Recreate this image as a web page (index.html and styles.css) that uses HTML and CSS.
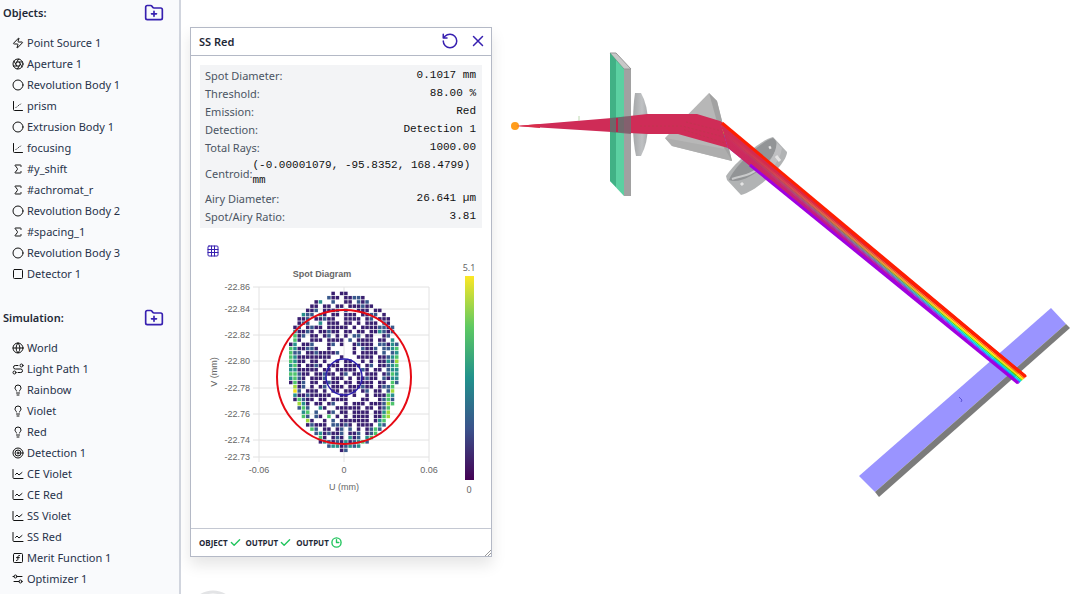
FILE: index.html
```html
<!DOCTYPE html>
<html lang="en">
<head>
  <meta charset="UTF-8">
  <meta name="viewport" content="width=device-width, initial-scale=1.0">
  <title>Optical Workbench</title>
  <link rel="stylesheet" href="styles.css">
</head>
<body>
  <svg class="sprite" aria-hidden="true">
    <symbol id="i-folder" viewBox="0 0 24 24"><path d="M12 10v6M9 13h6M20 20a2 2 0 0 0 2-2V8a2 2 0 0 0-2-2h-7.900a2 2 0 0 1-1.690-.900L9.600 3.900A2 2 0 0 0 7.930 3H4a2 2 0 0 0-2 2v13a2 2 0 0 0 2 2Z"/></symbol>
    <symbol id="i-zap" viewBox="0 0 24 24"><path d="M4 14a1 1 0 0 1-.780-1.630l9.900-10.200a.5.5 0 0 1 .860.460l-1.920 6.020A1 1 0 0 0 13 10h7a1 1 0 0 1 .780 1.630l-9.900 10.200a.5.5 0 0 1-.860-.460l1.920-6.020A1 1 0 0 0 11 14z"/></symbol>
    <symbol id="i-aperture" viewBox="0 0 24 24"><circle cx="12" cy="12" r="10"/><path d="m14.310 8 5.740 9.940M9.690 8h11.480M7.380 12l5.740-9.940M9.690 16 3.950 6.060M14.310 16H2.830M16.620 12l-5.740 9.940"/></symbol>
    <symbol id="i-circle" viewBox="0 0 24 24"><circle cx="12" cy="12" r="10"/></symbol>
    <symbol id="i-scatter" viewBox="0 0 24 24"><path d="M3 3v16a2 2 0 0 0 2 2h16M8 15l1-1M12 12l1-1M16 9l1-1"/></symbol>
    <symbol id="i-sigma" viewBox="0 0 24 24"><path d="M18 7V5a1 1 0 0 0-1-1H6.500a.5.5 0 0 0-.4.800l4.500 6a2 2 0 0 1 0 2.400l-4.500 6a.5.5 0 0 0 .4.800H17a1 1 0 0 0 1-1v-2"/></symbol>
    <symbol id="i-square" viewBox="0 0 24 24"><rect x="3" y="3" width="18" height="18" rx="2"/></symbol>
    <symbol id="i-globe" viewBox="0 0 24 24"><circle cx="12" cy="12" r="10"/><path d="M12 2a14.500 14.500 0 0 0 0 20 14.500 14.500 0 0 0 0-20M2 12h20"/></symbol>
    <symbol id="i-route" viewBox="0 0 24 24"><circle cx="5" cy="19" r="3"/><circle cx="19" cy="5" r="3"/><path d="M12 5H6.500a3.500 3.500 0 0 0 0 7h11a3.500 3.500 0 0 1 0 7H12"/></symbol>
    <symbol id="i-bulb" viewBox="0 0 24 24"><path d="M15 14c.2-1 .7-1.700 1.500-2.500 1-.9 1.500-2.200 1.500-3.500A6 6 0 0 0 6 8c0 1 .2 2.200 1.500 3.500.7.7 1.300 1.500 1.500 2.500M9 18h6M10 22h4"/></symbol>
    <symbol id="i-target" viewBox="0 0 24 24"><circle cx="12" cy="12" r="10"/><circle cx="12" cy="12" r="6"/><circle cx="12" cy="12" r="2"/></symbol>
    <symbol id="i-chart" viewBox="0 0 24 24"><path d="M2 3v16a2 2 0 0 0 2 2h18M7 13l3-3 4 4 6-5"/></symbol>
    <symbol id="i-function" viewBox="0 0 24 24"><rect x="3" y="3" width="18" height="18" rx="2"/><path d="M9 17c2 0 2.800-1 2.800-2.800V10c0-2 1-3.300 3.200-3M9 11.200h5.700"/></symbol>
    <symbol id="i-sliders" viewBox="0 0 24 24"><path d="M20 7h-9M14 17H4M2 7h2"/><circle cx="17" cy="17" r="3"/><circle cx="7" cy="7" r="3"/></symbol>
    <symbol id="i-reset" viewBox="0 0 24 24"><path d="M3 12a9 9 0 1 0 9-9 9.750 9.750 0 0 0-6.740 2.740L3 8M3 3v5h5"/></symbol>
    <symbol id="i-close" viewBox="0 0 24 24"><path d="M18 6 6 18M6 6l12 12"/></symbol>
    <symbol id="i-grid" viewBox="0 0 24 24"><rect x="2" y="2" width="20" height="20" rx="2"/><path d="M2 9h20M2 15h20M9 2v20M15 2v20"/></symbol>
    <symbol id="i-check" viewBox="0 0 24 24"><path d="M21 6 9 18l-6-6"/></symbol>
    <symbol id="i-clock" viewBox="0 0 24 24"><circle cx="12" cy="12" r="10"/><path d="M12 6v6h5"/></symbol>
  </svg>

  <aside class="sidebar">
    <section class="group">
      <div class="group-header">
        <h2>Objects:</h2>
        <button type="button" class="icon-btn" aria-label="Add object"><svg class="icon icon-lg"><use href="#i-folder"/></svg></button>
      </div>
      <ul class="tree">
        <li><a href="#"><svg class="icon"><use href="#i-zap"/></svg>Point Source 1</a></li>
        <li><a href="#"><svg class="icon"><use href="#i-aperture"/></svg>Aperture 1</a></li>
        <li><a href="#"><svg class="icon"><use href="#i-circle"/></svg>Revolution Body 1</a></li>
        <li><a href="#"><svg class="icon"><use href="#i-scatter"/></svg>prism</a></li>
        <li><a href="#"><svg class="icon"><use href="#i-circle"/></svg>Extrusion Body 1</a></li>
        <li><a href="#"><svg class="icon"><use href="#i-scatter"/></svg>focusing</a></li>
        <li><a href="#"><svg class="icon"><use href="#i-sigma"/></svg>#y_shift</a></li>
        <li><a href="#"><svg class="icon"><use href="#i-sigma"/></svg>#achromat_r</a></li>
        <li><a href="#"><svg class="icon"><use href="#i-circle"/></svg>Revolution Body 2</a></li>
        <li><a href="#"><svg class="icon"><use href="#i-sigma"/></svg>#spacing_1</a></li>
        <li><a href="#"><svg class="icon"><use href="#i-circle"/></svg>Revolution Body 3</a></li>
        <li><a href="#"><svg class="icon"><use href="#i-square"/></svg>Detector 1</a></li>
      </ul>
    </section>
    <section class="group">
      <div class="group-header">
        <h2>Simulation:</h2>
        <button type="button" class="icon-btn" aria-label="Add simulation"><svg class="icon icon-lg"><use href="#i-folder"/></svg></button>
      </div>
      <ul class="tree">
        <li><a href="#"><svg class="icon"><use href="#i-globe"/></svg>World</a></li>
        <li><a href="#"><svg class="icon"><use href="#i-route"/></svg>Light Path 1</a></li>
        <li><a href="#"><svg class="icon"><use href="#i-bulb"/></svg>Rainbow</a></li>
        <li><a href="#"><svg class="icon"><use href="#i-bulb"/></svg>Violet</a></li>
        <li><a href="#"><svg class="icon"><use href="#i-bulb"/></svg>Red</a></li>
        <li><a href="#"><svg class="icon"><use href="#i-target"/></svg>Detection 1</a></li>
        <li><a href="#"><svg class="icon"><use href="#i-chart"/></svg>CE Violet</a></li>
        <li><a href="#"><svg class="icon"><use href="#i-chart"/></svg>CE Red</a></li>
        <li><a href="#"><svg class="icon"><use href="#i-chart"/></svg>SS Violet</a></li>
        <li><a href="#"><svg class="icon"><use href="#i-chart"/></svg>SS Red</a></li>
        <li><a href="#"><svg class="icon"><use href="#i-function"/></svg>Merit Function 1</a></li>
        <li><a href="#"><svg class="icon"><use href="#i-sliders"/></svg>Optimizer 1</a></li>
      </ul>
    </section>
  </aside>

  <main class="viewport">
    <svg class="scene" viewBox="181 0 899 594" preserveAspectRatio="xMidYMid slice" role="img" aria-label="Optical scene">
      <defs>
        <linearGradient id="beam-fade" gradientUnits="userSpaceOnUse" x1="722" y1="135" x2="960" y2="333">
          <stop offset="0" stop-color="#cf2c57"/>
          <stop offset=".25" stop-color="#cf2c57" stop-opacity=".85"/>
          <stop offset=".6" stop-color="#cf2c57" stop-opacity=".5"/>
          <stop offset="1" stop-color="#cf2c57" stop-opacity="0"/>
        </linearGradient>
        <linearGradient id="lens" x1="0" x2="1">
          <stop offset="0" stop-color="#a5a7a9"/>
          <stop offset=".6" stop-color="#bfc1c3"/>
          <stop offset="1" stop-color="#a9abad"/>
        </linearGradient>
      </defs>
      <circle cx="213" cy="615" r="23" fill="none" stroke="#e3e4e6" stroke-width="3"/>

      <!-- collimating lens -->
      <path d="M635 93H641Q648 105 648 124T641 156H636Q633 142 633 124T635 93Z" fill="url(#lens)"/>

      <!-- prism -->
      <path d="M709 93 665 138 672 146 732 161 717 101Z" fill="#b7b7b7"/>
      <path d="M709 93 717 101 732 161 727 158Z" fill="#a2a2a2"/>
      <path d="M665 138 672 146 732 161 725 149Z" fill="#adadad"/>

      <!-- focusing doublet -->
      <path d="M726 176C735 162 762 139 773 137L787 152C787 164 757 191 741 195L727 180Z" fill="#b1b3b4"/>
      <path d="M729 180C736 164 762 141 773 138 781 143 774 157 764 166 754 176 738 184 729 180Z" fill="#929496"/>
      <path d="M732 179C744 175 750 176 760 167" fill="none" stroke="#c9cacb" stroke-width="2"/>
      <path d="M765 167Q775 157 777 143L782 148Q780 161 770 170Z" fill="#bfc0c2"/>
      <path d="M776 156 780 161M741 183 743 185M769 148 771 147" stroke="#e4e4e4" stroke-width="3"/>

      <!-- detector -->
      <path d="M1051 308 1066 324 875 492 859 476Z" fill="#9a94ff"/>
      <path d="M1066 324 1070 328 879 497 875 492Z" fill="#7b7b7b"/>
      <path d="m959 397 3 3-1 2" fill="none" stroke="#5b52d6"/>

      <!-- rays -->
      <path d="M516 126 612 118 647 114H697L720 121 728 148 678 134H647L612 132Z" fill="#cf2c57"/>
      <path d="M640 126H682L724 137M686 122 722 131M684 130 725 143" fill="none" stroke="#c23450" stroke-width="1" stroke-dasharray="2 2"/>
      <g id="spectrum"></g>
      <path d="M720 121 1026 376 1018 384 728 148Z" fill="url(#beam-fade)"/>
      <path d="M722 123 1025 376" stroke="#ff1e00" stroke-width="3"/>
      <path d="M750 165 1018 383" stroke="#a000e0" stroke-width="3"/>
      <circle cx="515" cy="126" r="4" fill="#ff9d1c"/>
      <path d="M516 126 540 124V128Z" fill="#d92e4b"/>
      <path d="M579 116v5" stroke="#bcd8b0" stroke-width="1"/>

      <!-- aperture plate -->
      <path d="M610 53H616L631 69H624Z" fill="#c8c8c8" stroke="#969696" stroke-width="1"/>
      <path d="M610 53 624 69V196L610 181Z" fill="#32c48a" fill-opacity=".8"/>
      <path d="M610 53 616 60V187L610 181Z" fill="#319c73" fill-opacity=".6"/>
      <path d="M624 69H631V196H624Z" fill="#909090" fill-opacity=".85"/>
      <path d="M610 118 631 116V134L610 132Z" fill="#7c5565" fill-opacity=".75"/>
      <path d="M617 118v14" stroke="#bd244a" stroke-width="2"/>
    </svg>

    <section class="window">
      <header class="window-header">
        <h1>SS Red</h1>
        <button type="button" class="icon-btn" aria-label="Refresh"><svg class="icon icon-xl"><use href="#i-reset"/></svg></button>
        <button type="button" class="icon-btn" aria-label="Close"><svg class="icon icon-xl"><use href="#i-close"/></svg></button>
      </header>

      <div class="window-body">
        <dl class="stats">
          <div><dt>Spot Diameter:</dt><dd>0.1017 mm</dd></div>
          <div><dt>Threshold:</dt><dd>88.00 %</dd></div>
          <div><dt>Emission:</dt><dd>Red</dd></div>
          <div><dt>Detection:</dt><dd>Detection 1</dd></div>
          <div><dt>Total Rays:</dt><dd>1000.00</dd></div>
          <div><dt>Centroid:</dt><dd>(-0.00001079, -95.8352, 168.4799) mm</dd></div>
          <div><dt>Airy Diameter:</dt><dd>26.641 µm</dd></div>
          <div><dt>Spot/Airy Ratio:</dt><dd>3.81</dd></div>
        </dl>

        <button type="button" class="icon-btn grid-btn" aria-label="Toggle grid"><svg class="icon"><use href="#i-grid"/></svg></button>

        <svg class="chart" viewBox="0 0 282 240" role="img" aria-label="Spot Diagram">
          <defs>
            <linearGradient id="viridis" x1="0" y1="1" x2="0" y2="0">
              <stop offset="0" stop-color="#440154"/>
              <stop offset=".25" stop-color="#3b528b"/>
              <stop offset=".5" stop-color="#21918c"/>
              <stop offset=".75" stop-color="#5ec962"/>
              <stop offset="1" stop-color="#fde725"/>
            </linearGradient>
          </defs>
          <text class="chart-title" x="122" y="17">Spot Diagram</text>
          <path class="gridlines" d="M53 27H229M53 49H229M53 75H229M53 101H229M53 128H229M53 154H229M53 180H229M53 197H229M59 27V202M144 27V202M229 27V202"/>
          <g class="ticks-y">
            <text x="50" y="30">-22.86</text>
            <text x="50" y="52">-22.84</text>
            <text x="50" y="78">-22.82</text>
            <text x="50" y="104">-22.80</text>
            <text x="50" y="131">-22.78</text>
            <text x="50" y="157">-22.76</text>
            <text x="50" y="183">-22.74</text>
            <text x="50" y="200">-22.73</text>
          </g>
          <g class="ticks-x">
            <text x="59" y="213">-0.06</text>
            <text x="144" y="213">0</text>
            <text x="229" y="213">0.06</text>
            <text x="144" y="230">U (mm)</text>
            <text transform="translate(17 112) rotate(-90)">V (mm)</text>
          </g>
          <g id="spots"></g>
          <circle cx="144" cy="117" r="67" fill="none" stroke="#e60a14" stroke-width="2"/>
          <circle cx="144" cy="117" r="18" fill="none" stroke="#2c1fb0" stroke-width="1.500"/>
          <rect x="265" y="16" width="9" height="204" fill="url(#viridis)"/>
          <text class="scale-label" x="269" y="11">5.1</text>
          <text class="scale-label" x="269" y="233">0</text>
        </svg>
      </div>

      <footer class="window-footer">
        <span>OBJECT <svg class="icon icon-sm"><use href="#i-check"/></svg></span>
        <span>OUTPUT <svg class="icon icon-sm"><use href="#i-check"/></svg></span>
        <span>OUTPUT <svg class="icon icon-sm"><use href="#i-clock"/></svg></span>
        <svg class="grip" viewBox="0 0 6 6"><path d="M0 6 6 0M3 6 6 3"/></svg>
      </footer>
    </section>
  </main>

  <script src="script.js"></script>
</body>
</html>
```
FILE: styles.css
```css
* {
  box-sizing: border-box;
}
body {
  margin: 0;
  display: flex;
  height: 100vh;
  overflow: hidden;
  background: #fff;
  color: #1f2937;
  font-family: 'Noto Sans', sans-serif;
  font-size: 11px;
}
h1, h2, ul, dl, dd {
  margin: 0;
  padding: 0;
}
.sprite {
  position: absolute;
  width: 0;
  height: 0;
}
.icon {
  width: 12px;
  height: 12px;
  flex-shrink: 0;
  fill: none;
  stroke: currentColor;
  stroke-width: 2;
  stroke-linecap: round;
  stroke-linejoin: round;
}
.icon-sm {
  width: 11px;
  height: 11px;
}
.icon-lg {
  width: 20px;
  height: 20px;
}
.icon-xl {
  width: 18px;
  height: 18px;
}
.icon-btn {
  display: flex;
  padding: 0;
  border: none;
  background: none;
  color: #3720b0;
  cursor: pointer;
}

/* Sidebar */
.sidebar {
  width: 181px;
  flex-shrink: 0;
  overflow: hidden;
  background: #f9fafc;
  border-right: 2px solid #d1d5de;
}
.group {
  margin-bottom: 21px;
}
.group-header {
  display: flex;
  align-items: center;
  justify-content: space-between;
  height: 25px;
  padding: 0 15px 0 3px;
}
.group-header h2 {
  font-size: 11px;
  font-weight: 600;
}
.tree {
  padding: 7px 0 0 12px;
  list-style: none;
}
.tree a {
  display: flex;
  align-items: center;
  gap: 3px;
  line-height: 21px;
  color: #27324a;
  text-decoration: none;
}
.tree .icon {
  color: #111;
}

/* 3D view */
.viewport {
  position: relative;
  flex: 1;
  min-width: 0;
}
.scene {
  display: block;
  width: 100%;
  height: 100%;
}

/* Floating result window */
.window {
  position: absolute;
  top: 27px;
  left: 9px;
  display: flex;
  flex-direction: column;
  width: 302px;
  min-height: 530px;
  background: #fff;
  border: 1px solid #b4b9c6;
  box-shadow: 0 8px 14px rgba(0,0,0,0.1);
}
.window-header {
  display: flex;
  align-items: center;
  gap: 10px;
  height: 28px;
  padding: 0 4px 1px 8px;
  border-bottom: 1px solid #b4b9c6;
}
.window-header h1 {
  flex: 1;
  font-size: 11px;
  font-weight: 600;
}
.window-body {
  flex: 1;
  padding: 9px;
}
.stats {
  padding: 2px 6px 2px 5px;
  background: #f3f4f6;
}
.stats div {
  display: flex;
  align-items: center;
  justify-content: space-between;
  min-height: 18px;
}
.stats dt {
  color: #4b5563;
  line-height: 18px;
}
.stats dd {
  padding: 1px 0 2px;
  color: #111;
  font-family: 'Liberation Mono', monospace;
  font-size: 11px;
  line-height: 15px;
}
.grid-btn {
  margin: 17px 0 3px 7px;
}
.chart {
  display: block;
  width: 100%;
  font-family: 'Liberation Sans', sans-serif;
  font-size: 9px;
  fill: #666;
}
.chart-title {
  font-weight: bold;
  text-anchor: middle;
}
.gridlines {
  fill: none;
  stroke: #e2e2e2;
}
.ticks-y {
  text-anchor: end;
}
.ticks-x {
  text-anchor: middle;
}
.scale-label {
  font-family: 'Noto Sans', sans-serif;
  text-anchor: middle;
}
.window-footer {
  position: relative;
  display: flex;
  align-items: center;
  gap: 5px;
  height: 28px;
  padding: 0 8px;
  border-top: 1px solid #c4c8d2;
  font-size: 8px;
  font-weight: bold;
}
.window-footer span {
  display: flex;
  align-items: center;
  gap: 2px;
}
.window-footer .icon {
  color: #22c55e;
  stroke-width: 3;
}
.grip {
  position: absolute;
  right: 0;
  bottom: 0;
  width: 6px;
  height: 6px;
  fill: none;
  stroke: #999;
}
```
FILE: script.js
```js
const NS = 'http://www.w3.org/2000/svg';

// Ray density per bin: a..y follow the viridis scale, dots are empty bins
const density = [
  '..........a.aa............',
  '.........baa.aabba........',
  '......at..b..aa.bab.......',
  '.....aa.aa.aa.aaabaa......',
  '....aab.aaab.b..aaa.aa....',
  '...tbb.ta.aa.aaa.aabb.a...',
  '..aab.aabaa..aaaa.ab.aaa..',
  '..abb..t.aaa.aa.a.aaa.ba..',
  '.ab.abaa.aaaaa.a.aaaabbab.',
  '.taaba.aabaa.aa.aa.aatbab.',
  '.gab.aa.ab.a.a.bb.aa..ab..',
  '.ga..aaa.aaaa.b.aaaa.aa.t.',
  'at.aab...ab.a..abaaa.bbatb',
  'gtaabba..a.....a.baab.bbtg',
  'gbb.aabaaaab...a.aaaa.b.bt',
  'gtaaaaaaaa..a...aaaa.aabtg',
  'gtaa.aa.a..a.aa..a.a.aatbl',
  'tga.aaba.aaa.aaaa.ab.aabtg',
  'ttaaaaa.aa.aaaaa.ba.aa.btt',
  'ggbaa.aabaa.ab.aa.aaa.abgt',
  'tgba.aaab.aaa.a.aabaa.batt',
  'agab.aa.abaa.aa.aaaa.aa.gb',
  '.lab.a.ab.aaa.aaabaa.abbg.',
  '.yb.aaa.a.aa.aaa.ab.aa.bl.',
  '.taabaaaaa..aa.a..a.aaagt.',
  '.agbaa.aa.aaaa...aa..abgb.',
  '..lta.aa.ab..a.aaa.aaablg.',
  '..bgb..ta..aaaaaa.aa.abg..',
  '...tg.b..ab.aa.aaaa.aatl..',
  '...gb.ba.g.a.a.aaaa.aagl..',
  '....la..a.b.aaaaaaa.atg...',
  '....abaaa.bbaba.aaaa.tb...',
  '.....gb.aa.ab.b.a.abgb....',
  '......btabaab.aab.abg.....',
  '.......ga.aba.tab.tg......',
  '.......atbabatabtgb.......',
  '.........bttabtbt.........',
  '............ab............'
];
const colors = {
  a: '#3a2070',
  b: '#39598c',
  t: '#28908c',
  g: '#4dc46c',
  l: '#9fd93a',
  y: '#f3e11e'
};

const spots = document.getElementById('spots');
const pitch = 4.24;
density.forEach((row, r) => {
  [...row].forEach((key, c) => {
    if (!colors[key]) return;
    const rect = document.createElementNS(NS, 'rect');
    rect.setAttribute('x', 89 + c * pitch);
    rect.setAttribute('y', 31.7 + r * pitch);
    rect.setAttribute('width', 3.5);
    rect.setAttribute('height', 3.5);
    rect.setAttribute('fill', colors[key]);
    spots.appendChild(rect);
  });
});

// Dispersed beam: bands of [colour, share at prism, share at detector]
const bands = [
  ['#ff1800', 0, 0],
  ['#ff7a00', 0.3, 0.25],
  ['#ffe600', 0.37, 0.36],
  ['#55e000', 0.43, 0.5],
  ['#00dcd8', 0.48, 0.6],
  ['#0090ff', 0.52, 0.72],
  ['#3c20ff', 0.56, 0.8],
  ['#a400e0', 0.6, 0.86]
];
const spectrum = document.getElementById('spectrum');
const near = t => `${720 + 8 * t},${121 + 27 * t}`;
const far = t => `${1027 - 9 * t},${376 + 8 * t}`;
bands.forEach(([color, a, b], i) => {
  const next = bands[i + 1] || [null, 1, 1];
  const band = document.createElementNS(NS, 'polygon');
  band.setAttribute('points', [near(a), far(b), far(next[2]), near(next[1])].join(' '));
  band.setAttribute('fill', color);
  spectrum.appendChild(band);
});
```
